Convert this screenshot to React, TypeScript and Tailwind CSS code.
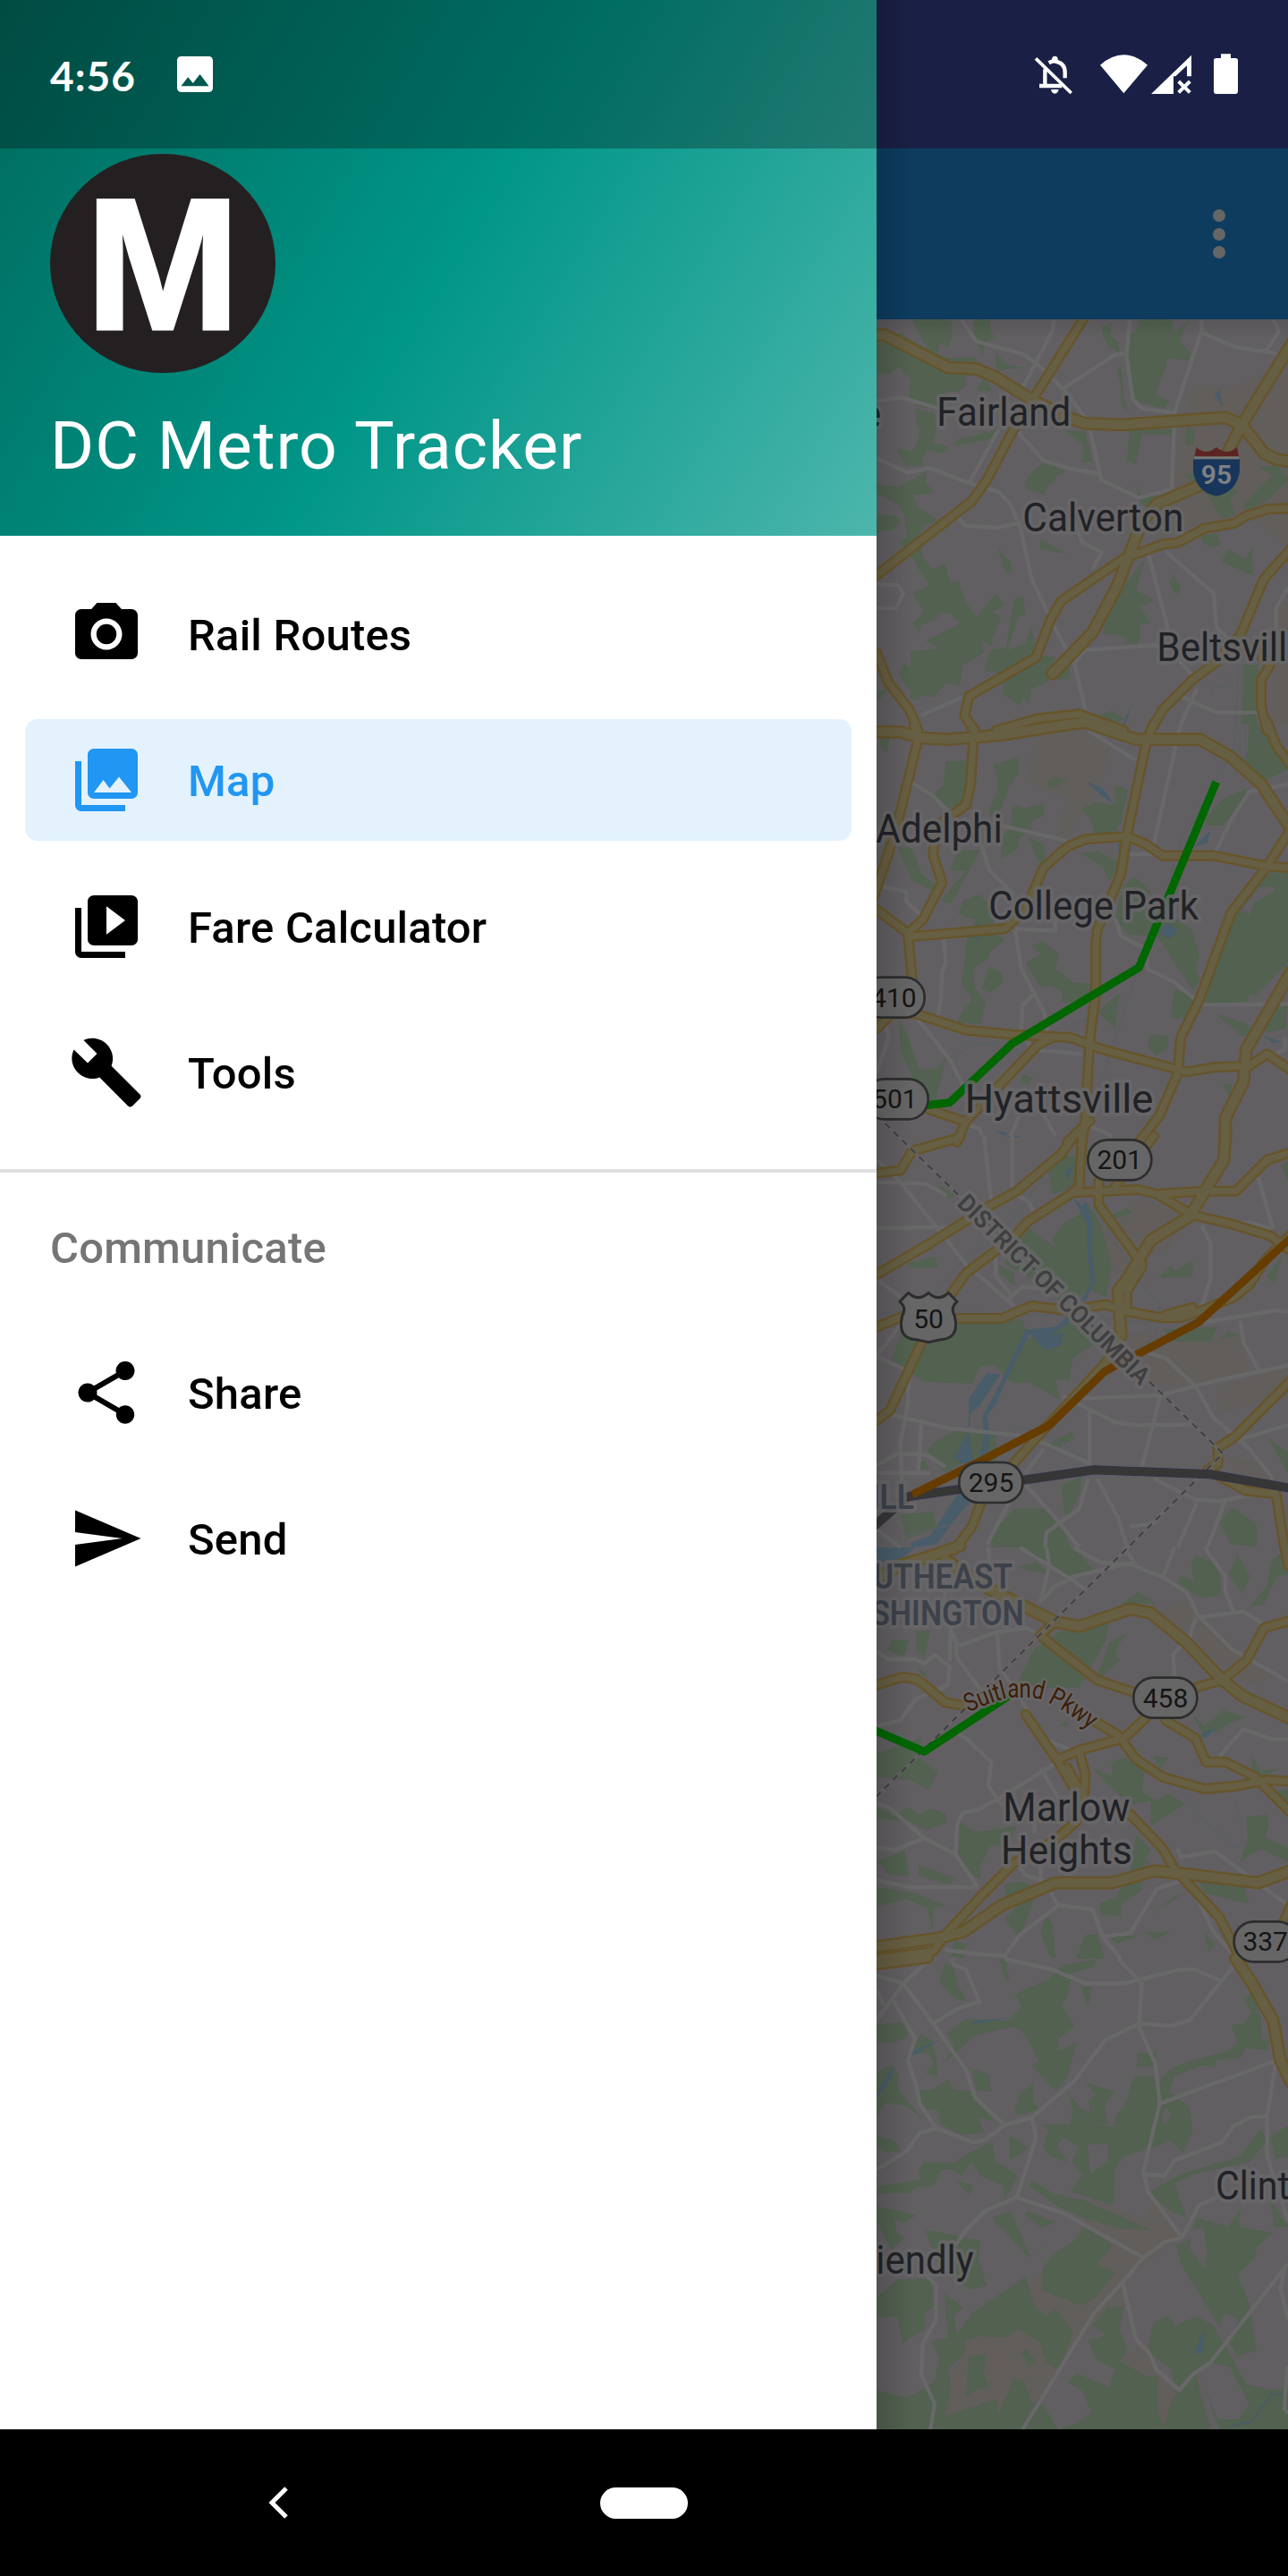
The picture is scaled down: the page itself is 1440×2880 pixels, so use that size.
import React from "react";
import {
  MdBuild,
  MdCameraAlt,
  MdPhotoLibrary,
  MdSend,
  MdShare,
  MdVideoLibrary,
} from "react-icons/md";
import type { IconType } from "react-icons";

type Tile = {
  transform: string;
  tan: string[];
  parks: string[];
  clearings?: string[];
  water: string[];
  minor: string[];
  rail: string[];
  major: string[];
  highway: string[];
};

/* Map sectors from north to south, drawn at three units per pixel. */
const tiles: Tile[] = [
  {
    transform: "translate(0 -7) scale(0.33333)",
    tan: [
      "M1060 250 1190 250 1380 170V790L1280 700 1100 700 950 760 900 690 1000 600 1010 430Z",
      "M1340 970H1380V1380H1320L1340 1180Z",
    ],
    parks: [
      "M0 95 80 65 130 100 235 150 330 150 355 200 300 215 300 245 270 265 240 260 215 305 200 325 130 310 105 270 115 225 75 180 45 205 0 205Z",
      "M118 22H250L255 80 238 118 213 95 200 150 160 100Z",
      "M325 22 380 22 385 65 405 80 365 100 355 145 340 100 330 90Z",
      "M400 135 440 175 497 183 400 192Z",
      "M130 320 195 335 200 400 190 435 245 450 220 470 170 460 155 485 155 512 97 512 65 453 120 462 135 440 145 390 132 370Z",
      "M265 425 410 390 375 425 265 445Z",
      "M365 210 390 262 335 262Z",
      "M755 45 790 35 785 75 815 100 812 130 780 115 760 80Z",
      "M880 22H990L1000 60 1045 30 1015 95 1055 135 1045 160 970 150 975 165 935 275 985 295 965 320 870 295 855 250 840 160 850 70 870 65Z",
      "M805 195 820 175 830 290 850 330 820 310 822 250Z",
      "M850 390 1000 390 985 410 890 405 868 508 840 495 845 430Z",
      "M630 395 700 395 725 500 690 500 692 440Z",
      "M1040 385 1065 390 1062 445 1035 440Z",
      "M495 580 510 545 555 505 600 515 635 530 600 550 590 570 572 580 565 610 510 595Z",
      "M0 572 75 585 165 530 167 570 195 603 120 612 145 655 205 695 165 710 145 740 155 820 190 860 232 840 245 905 275 900 295 960 335 1020 400 940 430 980 385 1005 418 1015 385 1115 350 1100 360 1140 290 1180 280 1250 235 1240 190 1290 150 1280 140 1300 110 1290 115 1270 75 1215 90 1175 115 1190 115 1135 210 1125 165 1100 280 1040 245 1005 220 1005 195 1030 150 1045 145 1075 120 1040 160 1000 118 940 175 912 105 800 75 770 100 755 95 680 70 640 0 605Z",
      "M0 678 60 678 80 695 60 725 0 735Z",
      "M0 1270 50 1255 0 1305Z",
      "M435 1120 460 960 490 950 500 1010 475 1020 455 1080 440 1130 500 1110 520 1045 530 1120 560 1150 600 1155 570 1240 520 1260 510 1310 490 1290 480 1318 425 1280 420 1210 360 1200 380 1130Z",
      "M405 785 450 835 455 860 435 878Z",
      "M552 758 635 808 548 790Z",
      "M900 825 870 930 930 962 885 985 920 1042 885 1040 880 1112 832 1110 835 1085 765 1075 760 1045 840 900Z",
      "M995 878 1020 920 1010 950 980 905Z",
      "M1180 793 1240 825 1262 780 1262 880 1155 835Z",
      "M1090 745 1140 738 1155 780 1120 785 1090 765Z",
      "M1035 540 1090 540 1215 600 1185 625 1200 680 1160 688 1110 610Z",
      "M1280 520 1345 510 1380 560 1320 620 1250 660 1225 650 1290 580 1330 545Z",
      "M1230 1180 1280 1180 1275 1380 1225 1380Z",
      "M735 1355 790 1333 830 1360 800 1380H740Z",
      "M865 570 885 610 940 600 945 660 885 640Z",
      "M600 1180 650 1180 645 1228 600 1228Z",
    ],
    water: ["M1150 255 1162 315 1135 275Z", "M857 1308 835 1380 825 1380Z"],
    minor: [
      "M285 22 335 95 490 137 550 180 640 270 705 360 720 410 755 560 880 620 990 590 1000 330 1090 60 1090 22",
      "M595 22 590 60 480 270",
      "M0 295 80 283 210 320",
      "M630 250 800 140 830 135",
      "M850 22 838 140 860 290 890 320 1000 335",
      "M1090 65 1205 115 1310 130 1380 145M1330 22 1350 60 1305 130",
      "M0 487 105 535 180 520 310 570 410 600 445 635 480 710 520 890 600 1060 665 1180 700 1330",
      "M310 570 410 390M475 400 560 495 640 520 750 540",
      "M270 680 295 712 400 720 480 705",
      "M0 910 70 912 90 940 65 990 0 990",
      "M665 700 690 770 755 803 725 860",
      "M910 800 980 1070",
      "M970 800 1130 940 1140 1055 1230 1140",
      "M665 1170 700 1130 990 1110",
      "M150 1350 285 1290M1010 1280 1140 1340 1280 1340M1000 1150 1060 1215M1075 1260 1020 1380",
      "M1380 920 1340 990 1340 1080",
    ],
    rail: ["M1120 1280 1130 1255 1200 1250 1160 1225M1215 1180 1205 1380"],
    major: [
      "M700 10 530 280 470 370 370 560 320 630 0 880",
      "M1380 655 1310 658 1240 680 1200 705 1100 722 1010 770 960 775 825 825 620 965 585 1025 535 1155 310 1285 295 1350 330 1400",
      "M1400 780 1300 890 1220 1080 1140 1170 1060 1230 1000 1290 960 1330 920 1400",
      "M0 1140 40 1240 110 1330 140 1400",
      "M1190 1110 1270 1130 1320 1180 1290 1230 1290 1320 1310 1400",
      "M400 1400 540 1360 680 1345 720 1360 830 1400",
    ],
    highway: [
      "M0 75 25 72 240 183 335 187 400 215 520 290 640 350 700 370 820 375 1000 362 1170 350 1225 375 1300 470 1340 490 1380 497",
      "M1400 90 1225 375 1150 520 1080 580 940 640 890 700 840 830 805 920 725 1070 590 1210",
    ],
  },
  {
    transform: "translate(0 453) scale(0.33333)",
    tan: ["M540 30 700 10 780 60 760 190 700 280 640 380 605 380 640 250 500 190Z"],
    parks: [
      "M232 125 300 120 310 260 240 280 195 235 225 200Z",
      "M393 135 478 110 478 160 440 215 420 280 385 310 375 290 410 210Z",
      "M570 195 600 175 640 190 585 213Z",
      "M455 268 500 280 560 265 563 305 525 320 520 350 480 380 475 415 418 452 420 380 450 345Z",
      "M683 285 735 260 800 270 800 205 843 218 820 330 800 360 735 365 710 310Z",
      "M1100 320 1160 250 1245 215 1225 260 1160 340 1110 340Z",
      "M1250 0H1330L1360 80 1380 150 1290 195 1220 130 1245 90Z",
      "M1290 500 1380 497V800L1250 930 1100 935 1130 800 1200 620Z",
      "M70 410 120 415 150 500 200 540 195 560 115 520Z",
      "M275 422 350 420 250 600 215 590 300 490 245 490Z",
      "M275 635 290 590 345 570 375 600 395 640 390 700 430 720 385 760 370 790 325 820 330 885 365 930 350 1005 265 1000 320 920 285 870 305 700 335 655Z",
      "M520 740 560 728 612 770 600 820 660 865 720 870 725 910 680 935 620 930 625 895 580 875 550 880 500 800 550 770Z",
      "M375 815 420 830 423 865 380 900 355 885Z",
      "M685 432 740 425 830 470 780 525 760 480Z",
      "M830 540 865 510 920 560 890 600 950 640 1000 650 1060 690 1083 770 1070 820 1085 860 1060 890 955 730 940 710 850 705 800 650 810 610Z",
      "M1000 885 1070 925 1035 988 985 985Z",
      "M915 1040 980 1045 975 1085 940 1110 910 1085Z",
      "M75 980 110 1060 145 1160 200 1155 235 1110 195 1270 130 1210 80 1090Z",
      "M1135 970 1240 1005 1280 1045 1225 1045Z",
      "M1325 955 1380 940 1370 1020 1300 1035Z",
      "M490 1175 525 1185 510 1210 480 1200Z",
      "M1160 1205 1190 1205 1190 1260Z",
      "M510 380 560 400 570 480 540 460Z",
      "M740 965 815 900 800 1020 770 990Z",
      "M10 50 45 45 35 95 15 80Z",
    ],
    clearings: ["M1285 545 1330 542 1335 560 1265 600 1250 640 1225 620Z", "M1250 905 1272 905 1265 930H1245Z"],
    water: [
      "M705 192 760 215 800 270 750 235Z",
      "M1065 410 1120 355 1110 395Z",
      "M945 700 975 665 1010 690 985 720Z",
      "M1298 1043 1358 1065 1330 1068Z",
      "M338 640 345 700 335 740Z",
      "M808 400H820L815 435Z",
      "M400 1360 440 1370 430 1380Z",
    ],
    minor: [
      "M120 195 190 240 240 290",
      "M350 400 380 490 460 570",
      "M425 340 640 390",
      "M710 20 870 120",
      "M1020 0 930 400",
      "M1380 200 1320 212 1250 225 1190 320 1135 430",
      "M840 435H960",
      "M0 540 100 560 100 595 150 640",
      "M225 720 232 800 220 830 215 930 205 980",
      "M465 690 485 820 560 960 575 1030",
      "M465 685 600 692 600 640",
      "M530 905 490 940 485 1030 520 1090 690 1105",
      "M800 650 820 710 900 750 910 820 1000 865 1090 940 1380 938",
      "M30 1000 40 1050 0 1170",
      "M130 980 180 1040 250 1130 300 1230",
      "M710 1345 790 1380M480 1310 450 1380M560 1310 600 1380M290 1340 345 1355 355 1380",
      "M1370 1050V1090L1280 1130",
    ],
    rail: [
      "M1165 140 1020 390 980 530M870 830 820 1000 750 1210",
      "M590 1030 740 975 840 935",
      "M410 1070 320 1070 270 1110 255 1190",
      "M1210 0 1190 110 1165 140M1235 0 1240 120M1220 10V120",
    ],
    major: [
      "M125 0 140 45 105 190 60 370 10 520 -10 580",
      "M325 50 315 200 300 270 200 340 190 440 220 530 155 655 105 700 0 620",
      "M105 712 430 685 500 620 560 480 640 410 700 385 840 375 900 400 960 440 1130 440 1310 475 1380 480",
      "M105 700 120 860",
      "M0 1020 50 970 130 970 300 1025 460 1040 650 1050 760 1090 1040 1165 1130 1150 1250 1145 1310 1105 1390 1160",
      "M905 60 840 370 820 500 740 690 735 740 735 900 715 1060 700 1330 690 1400",
      "M1390 350 1310 475 1190 630 1080 930 1020 1050 1010 1170 950 1310 880 1400",
      "M590 1050 540 1075 300 1330 270 1400",
      "M175 1290 290 1330",
      "M715 1330 640 1400",
      "M1310 -10 1340 70 1400 150M930 -5 905 60M310 -5 325 20",
    ],
    highway: [
      "M0 25 80 25 150 45 240 50 420 35 640 0 700 -8 780 20 870 50 1085 50 1190 110 1290 200 1390 350",
      "M1390 830 1240 1090 1230 1200 1170 1320 1170 1400",
    ],
  },
  {
    transform: "translate(0 913) scale(0.33333)",
    tan: [
      "M740 300 890 210 1020 260 900 360 850 440 800 460Z",
      "M830 660 1230 680 1250 800 1060 840 920 830Z",
      "M1140 840 1380 780V870L1150 930Z",
      "M890 300 1020 310 980 370 920 400Z",
      "M1170 1080 1280 1090 1330 1170 1240 1170Z",
    ],
    parks: [
      "M575 110 610 65 680 70 665 170 590 195Z",
      "M590 340 630 290 680 265 700 220 735 260 750 300 790 430 770 540 720 520 620 560 560 500 430 430 470 350 510 310 600 375Z",
      "M50 750 90 640 200 625 490 615 510 680 640 620 700 640 750 690 660 740 645 820 600 815 615 885 510 825 470 830 440 820 400 770 350 770 320 830 160 825Z",
      "M945 475 990 430 1000 455 1060 415V475Z",
      "M410 430 460 460 465 505 410 460Z",
      "M105 425 195 405 210 443 110 443Z",
      "M170 1060 190 1030 260 990 400 1000 400 1090 280 1100 230 1130Z",
      "M140 1095 165 1090 175 1120 140 1115Z",
      "M385 1340 460 1250 560 1250 620 1300 650 1380 390 1380Z",
      "M1150 1300 1190 1245 1275 1300V1380L1190 1370Z",
      "M575 1035 655 992 665 1015 620 1040Z",
      "M620 1170 690 1140 680 1200 645 1270 630 1270Z",
      "M780 270 840 240 855 260 810 275Z",
      "M960 650 1145 640 1120 690 1000 690Z",
      "M1310 470 1360 400 1335 500Z",
      "M190 130 210 165 265 205 230 205Z",
      "M1310 1010 1380 1060V1130Z",
      "M80 1270 190 1260 200 1320 100 1350Z",
      "M1155 680 1180 655 1220 670Z",
      "M1355 100 1380 85V150Z",
    ],
    water: [
      "M660 210 690 235 700 215 725 290 722 380 732 490 700 555 685 550 718 500 710 400 705 290Z",
      "M500 650 600 640 690 560 700 560 640 630 580 670 628 660 615 705 565 718Z",
      "M500 650 515 660 430 830 400 900 370 940 380 1000 370 1070 345 1080 360 1000 355 940 400 860Z",
      "M370 795 415 800 375 860 345 905 315 930 313 975 308 975 310 880Z",
      "M308 990 320 1070 330 1090 290 1100 260 1080Z",
      "M280 1190 320 1220 260 1290 200 1370 120 1380 115 1365 180 1340 240 1250Z",
      "M635 120 665 90 640 150Z",
      "M425 0H490L470 6Z",
    ],
    minor: [
      "M0 155 165 160 235 200",
      "M0 80 60 130 300 430 460 570",
      "M0 310 260 305",
      "M360 0 385 220M455 0V180",
      "M455 190 510 220 530 260",
      "M0 480 80 540",
      "M90 620 0 740 110 790 105 900 80 1030 85 1170",
      "M50 935 240 980 480 1005 550 1025 720 1100",
      "M0 1105 70 1065 170 1070 230 1110",
      "M0 1130 180 1130M150 965 140 1130",
      "M620 875 700 880 950 870 1140 820 1380 770",
      "M660 890 800 960 870 970 1070 968",
      "M715 920V1100M955 860 890 1110",
      "M900 725 970 745 1070 840 1130 945 1250 1050 1330 1150",
      "M1100 625 1340 585 1380 590",
      "M1220 620 1230 690 1285 790",
      "M1090 300 1120 360V480L1090 570M1200 295 1250 290 1320 310",
      "M1280 140 1330 310",
      "M400 400V470L450 530",
      "M440 550 490 505 600 520",
      "M500 1170 590 1270 680 1380",
      "M560 1050 500 1130M370 1370 450 1220",
      "M710 1150 680 1250 570 1330 565 1380",
      "M740 1150 810 1280 840 1380",
      "M850 1310 930 1300 970 1250",
      "M930 1150 1070 1220 1150 1225 1280 1200",
      "M1075 1230 1010 1380M1170 1220 1110 1380",
      "M0 1320 80 1380M1210 1020 1380 970",
    ],
    rail: [
      "M600 80 500 220 440 300 380 360 300 410 190 530",
      "M0 600 60 590 270 590 640 605 950 625",
      "M730 240 870 470 950 570 940 660 890 710",
      "M455 977 500 980 620 1030 700 1080",
      "M100 1340 350 1280",
      "M780 420 800 460 830 455",
    ],
    major: [
      "M0 125 80 115 120 50 280 5",
      "M0 465 180 360 370 240 470 185 620 60 670 -10",
      "M0 640 90 605M270 612 420 612 520 570 640 585 770 565 820 585 960 610 1020 610 1080 590 1200 540 1250 500 1300 420 1390 330",
      "M690 -10 680 170 650 195 510 285 460 340 300 460 250 530",
      "M660 190 880 180 940 195 1100 185 1205 185 1310 80 1390 55",
      "M155 685 45 920 0 955",
      "M745 150 745 230 890 430",
      "M890 440 840 520 840 580M970 600 1060 575",
      "M940 195 1060 265 1190 295 1320 335 1380 380",
      "M930 0 800 170",
      "M820 660 770 760 640 900 520 1030 450 1110",
      "M350 1230 320 1310 260 1390",
      "M1390 820 1200 1010 1145 1045 1145 1100 1110 1120 1240 1190 1340 1200 1370 1390",
    ],
    highway: ["M1170 -10 1165 80 1050 270 920 350 840 480 810 520 820 670"],
  },
  {
    transform: "translate(0 1373) scale(0.33333)",
    tan: [
      "M1060 240 1170 300 1235 370 1160 400 1080 320Z",
      "M1220 390 1330 420 1280 460 1200 440Z",
      "M950 210 1040 170 1060 230 1030 280Z",
    ],
    parks: [
      "M500 0H660L730 75 650 105 580 70Z",
      "M470 65 540 50 580 90 520 80Z",
      "M35 345 50 310 110 310 90 365Z",
      "M135 280H180L160 370 130 345Z",
      "M475 450 530 340 620 280 780 255 770 310 680 470 560 470Z",
      "M740 430 780 320 835 290 800 350 815 380 750 440Z",
      "M820 190 880 150 940 190Z",
      "M1070 25 1150 60 1155 160 1090 170 1010 120 1020 95 1065 110 1055 60Z",
      "M1210 25 1255 100 1225 155 1180 90Z",
      "M1250 200 1310 130 1320 50 1380 0V90L1340 100 1300 190Z",
      "M1060 560 1100 600 1160 545 1240 570 1180 590 1140 620 1090 620Z",
      "M0 690 150 640 140 700 205 755 175 812 110 780 0 770Z",
      "M0 870V910L110 920 170 950 235 920 230 890 180 875 145 900 110 870 60 900Z",
      "M280 920 330 955 470 935 440 1000 380 1000 345 1080 350 1115 305 1085 275 1030Z",
      "M0 1050 95 1018 110 1105 40 1095Z",
      "M140 1065 270 1110 240 1130 140 1100Z",
      "M0 1140 130 1160 235 1200 190 1210 188 1285 170 1210 100 1180 0 1205Z",
      "M720 735 790 770 790 720 830 705 900 735 890 820 940 850 980 825 1035 860 920 935V850L860 860 800 820 770 790Z",
      "M870 965 920 1010 900 1050 920 1055 850 1095Z",
      "M1240 905 1310 895 1315 940 1300 970 1380 1010V1055L1290 1010 1220 1050 1245 980Z",
      "M750 1195 800 1175 830 1130 890 1110 890 1150 820 1200 820 1240 750 1230Z",
      "M430 1130 490 1120 540 1150 480 1310 430 1250 480 1190 430 1160Z",
      "M900 1245 1000 1170 1040 1155 920 1230Z",
      "M550 1290 570 1240 590 1260 600 1380 580 1370Z",
      "M670 1380 700 1300 740 1295 765 1380Z",
      "M1080 1110 1230 1130 1250 1195 1100 1160Z",
      "M775 1305 880 1300 810 1330Z",
      "M895 1290 985 1290 940 1315Z",
      "M1100 1290 1135 1330 1115 1360Z",
      "M930 700 980 705 950 740Z",
      "M1260 700 1290 750 1350 740 1300 770 1260 750Z",
      "M260 1320 300 1330 290 1380 250 1370Z",
      "M1340 820 1380 810V860Z",
      "M615 600 640 580 640 600Z",
      "M135 400 175 430 150 430Z",
    ],
    water: ["M0 0 130 0 80 40 0 50Z", "M1090 640 1090 625 1140 605 1110 635Z"],
    minor: [
      "M375 0 380 60",
      "M0 350 40 375 130 375 160 390 195 360 245 400 240 460 190 490",
      "M250 260 245 380M230 150 220 220 265 310 270 370 350 480",
      "M275 330 400 285 500 270 540 290",
      "M405 290 412 400 510 550",
      "M480 0 650 105 700 140M650 100 860 50",
      "M570 0 580 60 550 180 600 130 650 105",
      "M660 0 750 50 860 60 960 100 1040 150 1080 230 1190 340 1380 450",
      "M830 0 870 60M1000 0 960 100",
      "M1100 0 1170 100V150L1200 220",
      "M1080 235 1230 215 1310 265",
      "M1070 240 1050 300 995 360 1000 430",
      "M240 460 130 510 80 580 0 600",
      "M265 620 300 640 385 720 375 800 430 880",
      "M600 725 430 830 340 880 290 890 270 930 265 1030 340 1140",
      "M0 860 40 870 160 975 265 1030",
      "M0 1005 60 1015 160 975",
      "M0 1115 110 1140 340 1140",
      "M550 740 610 840M560 640 650 680",
      "M1150 700 1230 610 1330 645 1380 645",
      "M470 1060 500 1100 560 1120 610 1200",
      "M430 1370 480 1300 520 1270 610 1200 725 1215 760 1310 820 1380",
      "M760 1305 850 1295 940 1145 1020 1120",
      "M1010 1010 1020 1040 1135 1020 1380 1200",
      "M1060 1140 1130 1290 1200 1370",
      "M230 1350 350 1365 430 1370",
      "M530 900V960M550 1060V1120",
    ],
    rail: ["M1025 810 1070 890 1200 1008 1225 990 1225 920 1200 850"],
    major: [
      "M600 250 548 295 740 445 860 485",
      "M-10 465 85 435 130 440 160 460 230 520 290 530",
      "M1390 245 1300 270 1240 380 1160 445 1070 470",
      "M500 560 610 720 670 820M640 740 690 830",
      "M610 710 680 680 830 640 910 565",
      "M680 685 700 760 695 830",
      "M735 585 810 630 870 710 960 770 1100 810 1210 800 1310 780 1390 785",
      "M970 580 1070 640 1105 720 1170 720 1270 770 1390 890",
      "M850 895 960 1010 1000 1080 1150 1240 1215 1370",
      "M690 820 670 920 600 980 460 1060 350 1170 230 1300 190 1355 0 1380",
      "M1350 1290 1390 1200M1380 60 1370 -10",
    ],
    highway: [
      "M-10 110 80 60 180 30 280 -5",
      "M230 40 380 140 500 200 600 250 680 265 850 207 920 220 1040 320 1160 445 1230 500 1390 575",
      "M0 1340 210 1310 290 1290 420 1200 600 1125 790 1125 930 1085 1080 1100 1280 1125 1390 1085",
    ],
  },
  {
    transform: "translate(0 1833) scale(0.33333 0.34439)",
    tan: [
      "M650 940 700 840 900 850 930 790 1020 900 820 1050 830 1130 680 1230 500 1528H200L300 1240 470 1200 520 1060 600 960Z",
      "M720 780 900 850 930 790 1020 900 900 900Z",
      "M940 1340H1080L1120 1528H950Z",
      "M810 1300 900 1260 950 1340 890 1360Z",
    ],
    parks: [
      "M465 115 590 60 655 60 640 120 620 150 665 220 605 262 615 298 670 270 640 385 600 430 520 345 545 332 490 235 455 220 330 250 230 335 260 280 235 240 300 195 440 200 485 155Z",
      "M570 75 620 20 740 0 730 25 640 50Z",
      "M210 78 230 10 260 30 275 90 305 138 265 132Z",
      "M408 0 430 0 445 60 438 80Z",
      "M685 90 725 90 708 158Z",
      "M0 215 80 205 110 240 95 260 60 270 0 275Z",
      "M110 310 150 240 185 265 200 320 205 383 165 370 190 340 170 305Z",
      "M0 370 50 345 75 375 70 420 155 520 100 480 35 465 0 510Z",
      "M145 425 190 425 240 392 260 425 320 428 330 455 400 530 340 515 362 565 280 572 215 535 205 490 150 485Z",
      "M318 355 375 375 385 430 335 428Z",
      "M480 440 525 405 525 465 545 485 495 505 462 500Z",
      "M447 573 512 615 447 653Z",
      "M140 690 160 660 260 662 310 630 390 592 400 655 475 705 430 780 425 735 350 705 315 660 285 705 255 685 215 685 210 710 185 740 135 740 115 760 0 762V740L150 715Z",
      "M265 718 325 735 312 768Z",
      "M0 575 60 590 80 625 30 628 0 610Z",
      "M0 803 135 832 95 858 60 845 70 890 95 905 50 945 0 850Z",
      "M645 440 690 490 740 505 745 540 800 545 800 515 830 480 865 380 930 380 945 450 955 385 1000 350 1075 325 1180 300 1210 270 1190 215 1230 210 1258 175 1230 130 1260 115 1290 190 1290 260 1320 262 1310 298 1240 290 1220 320 1140 330 1135 355 1100 345 1000 380 980 430 1050 480 1060 560 1030 630 985 590 940 610 900 620 830 640 800 680 795 800 650 755 690 700 655 660 680 610 625 580 605 605 640 660 580 640 560 610 575 560 555 535 650 535 660 500Z",
      "M700 402 797 430 765 475 775 540 720 530 710 465 735 440Z",
      "M875 305 940 305 930 350 875 350Z",
      "M520 720 600 765 700 785 800 830 920 880 810 875 730 850 690 840 600 800 515 740Z",
      "M385 840 450 820 515 965 565 930 510 970Z",
      "M510 820 600 855 550 875 495 830Z",
      "M590 960 660 920 700 870 790 930 740 990 800 1020 730 1100 685 1125 555 1075 555 1010Z",
      "M0 1100 70 1040 185 1040 190 1130 160 1150 165 1200 85 1250 70 1160 0 1165Z",
      "M225 1085 290 1130 260 1160 270 1220 320 1150 500 1030 530 1130 570 1160 600 1135 660 1215 610 1330 570 1310 545 1245 475 1200 440 1230 340 1225 300 1240 290 1290 240 1330 250 1380 240 1450 215 1528H0V1400L100 1425 150 1400 195 1370 210 1300 185 1240 240 1230Z",
      "M300 1420 310 1290 365 1285 360 1350 380 1390 330 1400Z",
      "M180 1528 240 1480 400 1430 408 1480 460 1360 495 1370 520 1440 560 1450 610 1528Z",
      "M485 1280 505 1268 535 1310 510 1325Z",
      "M610 1528 670 1510 720 1470 690 1400 640 1375 670 1345 780 1390 800 1330 735 1300 710 1240 770 1220 725 1190 775 1130 830 1130 815 1200 840 1270 815 1305 900 1355 945 1355 940 1450 960 1528Z",
      "M1070 840 1180 870 1220 810 1215 870 1330 890 1275 935 1270 970 1210 1025 1250 1120 1275 1270 1210 1290 1155 1200 1020 990 1005 930 1060 905Z",
      "M930 1180 980 1160 1000 1190 1075 1160 1130 1190 1240 1380 1330 1400 1380 1390V1528H1150L1080 1340 1015 1400 940 1330 910 1260Z",
      "M1320 580 1380 540V640L1340 650Z",
      "M910 760 1020 700 1220 640 1290 550 1310 590 1250 660 1060 700 1000 730 1040 840 990 820Z",
      "M1320 780 1380 870H1335Z",
      "M160 878 350 915 340 970 370 1060 315 1075 215 1000Z",
      "M960 1528 985 1450 1015 1400 1070 1350 1120 1528Z",
    ],
    clearings: [
      "M707 603 775 600 775 655 718 700Z",
      "M955 510 970 480 990 505 965 540Z",
      "M1060 885 1095 865 1110 960 1098 1005 1050 940Z",
      "M1140 1200 1170 1150 1215 1170 1180 1240Z",
      "M1080 1345 1120 1310 1185 1325 1250 1445 1215 1495H1145Z",
      "M915 1280 985 1330 995 1375 940 1340Z",
    ],
    water: [
      "M315 213 335 200 455 190Z",
      "M85 325 120 300 215 262 130 310Z",
      "M0 440 35 375 65 345 40 400 0 455Z",
      "M1100 1200 1095 1280 1065 1280Z",
      "M1185 1528 1195 1512 1255 1501 1325 1410 1365 1413V1418L1327 1415 1257 1506 1197 1516 1190 1528Z",
    ],
    minor: [
      "M0 55 90 80 190 -10M90 80 0 200M0 100 25 150",
      "M50 125 130 260 105 330 130 400 145 470 200 550 320 595 360 590 430 540 520 515 660 400 765 265 880 210 990 217 1050 200 1200 20",
      "M90 80 190 210 300 360 330 450 430 540",
      "M190 210 275 160 345 140 300 35 260 20 250 0",
      "M0 685 100 625 145 565 200 550",
      "M430 0 590 35 700 80 830 80 1015 35 1070 35 1150 70",
      "M810 0 890 80 880 220 935 340 950 470 895 690 910 755 1025 905",
      "M950 470 1340 330 1310 510 1310 640 1380 850",
      "M900 700 965 705 1000 655 1160 595 1195 545 1250 515 1310 510",
      "M520 515 535 580 470 775 370 815 300 880 265 930",
      "M470 775 625 825 895 970",
      "M1140 775 1080 800 1025 905 965 920 895 970 825 1050 730 1150 490 1528",
      "M825 1050 870 1235 915 1280 940 1335 1015 1400 1060 1350 1120 1310 1380 990",
      "M1380 1170 1355 1070 1370 1000",
      "M160 1020 200 1060V1170L155 1250 150 1350 195 1445 180 1528",
      "M1378 1320 1368 1460 1380 1475",
    ],
    rail: [],
    major: [],
    highway: ["M0 15 170 -5", "M1205 0 1260 80 1330 200 1355 330 1390 400"],
  },
];

type Label = { text: string; x: number; y: number; width?: number; end?: boolean };

/* Labels use the same three-units-per-pixel space, measured from the map's first sector. */
const places: Label[] = [
  { text: "e", x: 16, y: 385, end: true },
  { text: "Fairland", x: 202, y: 377, width: 450 },
  { text: "Calverton", x: 490, y: 732, width: 540 },
  { text: "Beltsvill", x: 940, y: 1168, width: 438 },
  { text: "Adelphi", x: -2, y: 1775, width: 424 },
  { text: "College Park", x: 376, y: 2033, width: 704 },
  { text: "Hyattsville", x: 296, y: 2683, width: 632 },
  { text: "Marlow", x: 424, y: 5057, width: 426 },
  { text: "Heights", x: 417, y: 5203, width: 440 },
  { text: "Clint", x: 1137, y: 6326, width: 249 },
  { text: "iendly", x: -2, y: 6577, width: 328 },
];

const districts: Label[] = [
  { text: "ILL", x: -20, y: 4010, width: 146 },
  { text: "UTHEAST", x: -12, y: 4278, width: 468 },
  { text: "SHINGTON", x: -18, y: 4402, width: 512 },
];

const routeMarkers = [
  { text: "410", x: -52, y: 2228, cx: 58 },
  { text: "501", x: -40, y: 2569, cx: 61 },
  { text: "201", x: 709, y: 2773, cx: 815 },
  { text: "295", x: 277, y: 3855, cx: 384 },
  { text: "458", x: 862, y: 4577, cx: 969 },
  { text: "337", x: 1199, y: 5395, cx: 1304 },
];

function layer(pick: (t: Tile) => string[] | undefined) {
  return tiles.map((t, i) => (
    <g key={i} transform={t.transform}>
      <path d={(pick(t) ?? []).join("")} />
    </g>
  ));
}

function MetroMap() {
  return (
    <svg
      className="block h-full w-full bg-[#625f62] font-['Roboto',sans-serif]"
      viewBox="0 0 460 2359"
      fill="none"
      strokeLinejoin="round"
    >
      <g fill="#615e5b">{layer((t) => t.tan)}</g>
      <g fill="#526150">{layer((t) => t.parks)}</g>
      <g fill="#625f62">{layer((t) => t.clearings)}</g>
      <g fill="#485c69">{layer((t) => t.water)}</g>
      <g stroke="#5a5f62" strokeWidth="5">{layer((t) => t.rail)}</g>
      <g stroke="#686869" strokeWidth="13">{layer((t) => t.minor)}</g>
      <g stroke="#66542a" strokeWidth="36" strokeLinecap="round">{layer((t) => t.major)}</g>
      <g stroke="#66542a" strokeWidth="44" strokeLinecap="round">{layer((t) => t.highway)}</g>
      <g stroke="#675f43" strokeWidth="22" strokeLinecap="round">{layer((t) => t.major)}</g>
      <g stroke="#675f43" strokeWidth="30" strokeLinecap="round">{layer((t) => t.highway)}</g>

      <g transform="translate(0 -7) scale(0.33333)">
        <path d="M0 2690 1162 3825 0 4975" stroke="#6a6869" strokeWidth="12" opacity="0.6" />
        <path d="M0 2690 1162 3825 0 4975" stroke="#3f4043" strokeWidth="6" strokeDasharray="22 18" />

        <g strokeWidth="27" strokeLinejoin="miter">
          <path d="M1139 1573 880 2195 455 2450 245 2648 165 2657" stroke="#006600" />
          <path d="M-10 4752 160 4825 440 4640" stroke="#006600" strokeLinejoin="round" />
          <path d="M-10 4070 105 3970 730 3880 1120 3895 1390 3942" stroke="#33315a" strokeWidth="30" />
          <path d="M-10 4070 105 3970 730 3880 1120 3895 1390 3942" stroke="#363636" />
          <path d="M1390 3102 1080 3385 765 3550 580 3730 330 3860 120 3963" stroke="#663c00" />
        </g>

        <g stroke="#686768" strokeWidth="24" strokeOpacity="0.85" paintOrder="stroke" fontSize="133">
          <g fill="#212226">
            {places.map((p) => (
              <text
                key={p.text}
                x={p.x}
                y={p.y}
                textLength={p.width}
                lengthAdjust="spacingAndGlyphs"
                textAnchor={p.end ? "end" : "start"}
              >
                {p.text}
              </text>
            ))}
          </g>
          <g fill="#3c414b" fontSize="114" fontWeight="600">
            {districts.map((p) => (
              <text key={p.text} x={p.x} y={p.y} textLength={p.width} lengthAdjust="spacingAndGlyphs">
                {p.text}
              </text>
            ))}
          </g>
          <text
            transform="translate(266 2990) rotate(44.6)"
            fill="#3f3f40"
            fontSize="82"
            fontWeight="600"
            textLength="868"
            lengthAdjust="spacingAndGlyphs"
          >
            DISTRICT OF COLUMBIA
          </text>
          <path id="parkway" d="M308 4694Q380 4660 440 4645L530 4645Q590 4655 716 4752" stroke="none" />
          <text fill="#3d1d06" fontSize="86" strokeWidth="16">
            <textPath href="#parkway" textLength="446" lengthAdjust="spacingAndGlyphs">
              Suitland Pkwy
            </textPath>
          </text>
        </g>

        <g fontSize="90" fill="#151515" textAnchor="middle">
          {routeMarkers.map((m) => (
            <g key={m.text}>
              <rect x={m.x} y={m.y} width="213" height="135" rx="66" fill="#666666" stroke="#2d2d2e" strokeWidth="8" />
              <text x={m.cx} y={m.y + 99}>
                {m.text}
              </text>
            </g>
          ))}
          <path
            d="M107 3286Q140 3318 174 3286Q208 3318 241 3286L270 3316Q246 3336 262 3364Q280 3442 210 3444L174 3452 138 3444Q68 3442 86 3364Q102 3336 78 3316Z"
            fill="#666666"
            stroke="#2d2d2e"
            strokeWidth="9"
          />
          <text x="174" y="3404">
            50
          </text>
          <path d="M1062 490H1218V530Q1208 600 1140 614Q1072 600 1062 530Z" fill="#18365b" />
          <path d="M1073 450Q1105 480 1140 450Q1175 480 1209 450L1215 480H1067Z" fill="#5d2424" />
          <path d="M1066 482H1216V490H1064Z" fill="#777777" />
          <text x="1140" y="573" fill="#7f8083" fontWeight="600">
            95
          </text>
        </g>
      </g>
    </svg>
  );
}

function PictureGlyph() {
  return (
    <svg className="h-10 w-10" viewBox="3 3 18 18" fill="white">
      <path d="M21 19V5c0-1.100-.9-2-2-2H5c-1.100 0-2 .9-2 2v14c0 1.100.9 2 2 2h14c1.100 0 2-.9 2-2zM8.500 13.500l2.500 3.010L14.500 12l4.500 6H5l3.500-4.500z" />
    </svg>
  );
}

function StatusIcons() {
  return (
    <div className="flex items-start text-white">
      <svg className="h-[46px] w-[45px]" viewBox="525 180 135 138" fill="none" stroke="currentColor">
        <path d="M534 196 653 312" strokeWidth="11" />
        <path d="M565 232V290M546 288H622M578 211Q590 203 600 206Q632 212 632 242V262" strokeWidth="13" />
        <path d="M588 202V197Q590 188 598 188Q607 188 608 197V204Z" fill="currentColor" stroke="none" />
        <path d="M585 300H611Q608 314 598 314Q588 314 585 300Z" fill="currentColor" stroke="none" />
      </svg>
      <svg className="ml-[30px] h-[46px] w-[54px]" viewBox="750 180 162 138" fill="currentColor">
        <path d="M750 218Q829 150 909 218L829 313Z" />
      </svg>
      <svg className="ml-[3px] h-[46px] w-[46px]" viewBox="921 180 138 138" fill="currentColor">
        <path d="M921 315 1056 185V256H1041V220L1003 256H996V315Z" />
        <path d="M1013 273 1051 310M1051 273 1013 310" stroke="currentColor" strokeWidth="12" />
      </svg>
      <svg className="ml-6 h-[46px] w-[27px]" viewBox="1131 180 81 138" fill="currentColor">
        <path d="M1155 181H1188V195H1204Q1212 195 1212 203V306Q1212 315 1204 315H1139Q1131 315 1131 306V203Q1131 195 1139 195H1155Z" />
      </svg>
    </div>
  );
}

function MetroLogo() {
  return (
    <svg className="ml-14 mt-[6px] block h-[245px] w-[252px]" viewBox="0 0 252 245">
      <ellipse cx="126" cy="122.500" rx="126" ry="122.500" fill="#242021" />
      <text
        x="39.500"
        y="195.500"
        textLength="173"
        lengthAdjust="spacingAndGlyphs"
        className="font-['Liberation_Sans',sans-serif] text-[210px] font-bold"
        fill="white"
        stroke="white"
        strokeWidth="3"
      >
        M
      </text>
    </svg>
  );
}

function NavItem({ icon: Icon, label, active = false }: { icon: IconType; label: string; active?: boolean }) {
  return (
    <a
      className={
        active
          ? "mx-7 flex h-[136px] items-center rounded-[14px] bg-[#e3f2fd] pl-[49px] text-[#2196f3]"
          : "mx-7 flex h-[136px] items-center rounded-[14px] pl-[49px] text-black"
      }
    >
      <Icon className="h-[84px] w-[84px]" />
      <span className="ml-[49px] pt-[3px] text-[49px] font-medium leading-none tracking-[0.2px]">{label}</span>
    </a>
  );
}

function Drawer() {
  return (
    <aside className="flex h-full w-[980px] flex-col bg-white">
      <header className="h-[598.5px] bg-[linear-gradient(121.4deg,#00695c_0%,#009688_50%,#4db6ac_100%)]">
        <div className="flex h-[166px] items-center bg-[#00000047] pl-14">
          <span className="w-[142px] pt-[3px] font-['Lato',sans-serif] text-[46px] font-bold leading-none tracking-[1px] text-white">
            4:56
          </span>
          <PictureGlyph />
        </div>
        <MetroLogo />
        <h1 className="ml-14 mt-[39px] text-[75px] leading-[84px] tracking-[1px] text-white">DC Metro Tracker</h1>
      </header>
      <nav className="flex flex-col gap-[27.5px] pt-[42px]">
        <NavItem icon={MdCameraAlt} label="Rail Routes" />
        <NavItem icon={MdPhotoLibrary} label="Map" active />
        <NavItem icon={MdVideoLibrary} label="Fare Calculator" />
        <NavItem icon={MdBuild} label="Tools" />
      </nav>
      <div className="mt-10 h-1 bg-[#e0e0e0]" />
      <h2 className="mb-[8.5px] h-[169px] pl-14 text-[49px] font-medium leading-[169px] tracking-[0.2px] text-[#757575]">
        Communicate
      </h2>
      <nav className="flex flex-col gap-[27.5px]">
        <NavItem icon={MdShare} label="Share" />
        <NavItem icon={MdSend} label="Send" />
      </nav>
    </aside>
  );
}

export default function App() {
  return (
    <div className="flex h-[2880px] w-[1440px] flex-col overflow-hidden bg-black font-['Roboto',sans-serif]">
      <main className="flex h-[2716px]">
        <Drawer />
        <section className="relative flex w-[460px] flex-col">
          <div className="flex h-[166px] justify-end bg-[#1a2045] pr-14 pt-[60px]">
            <StatusIcons />
          </div>
          <div className="flex h-[191px] items-center justify-end bg-[#0d3c5f] pr-[70px]">
            <div className="flex flex-col gap-[6.5px]">
              <i className="h-[14px] w-[14px] rounded-full bg-[#666666]" />
              <i className="h-[14px] w-[14px] rounded-full bg-[#666666]" />
              <i className="h-[14px] w-[14px] rounded-full bg-[#666666]" />
            </div>
          </div>
          <div className="h-[2359px] overflow-hidden">
            <MetroMap />
          </div>
          <div className="pointer-events-none absolute inset-y-0 left-0 w-10 bg-linear-to-r from-black/15 to-transparent" />
          <div className="pointer-events-none absolute inset-x-0 top-[357px] h-5 bg-linear-to-b from-black/10 to-transparent" />
        </section>
      </main>
      <footer className="flex h-[164px] items-center">
        <svg className="ml-[300px] h-9 w-6" viewBox="0 0 24 36" fill="none" stroke="white" strokeWidth="5">
          <path d="M20 2 4 18 20 34" />
        </svg>
        <div className="ml-[347px] h-[35px] w-[98px] rounded-full bg-white" />
      </footer>
    </div>
  );
}
